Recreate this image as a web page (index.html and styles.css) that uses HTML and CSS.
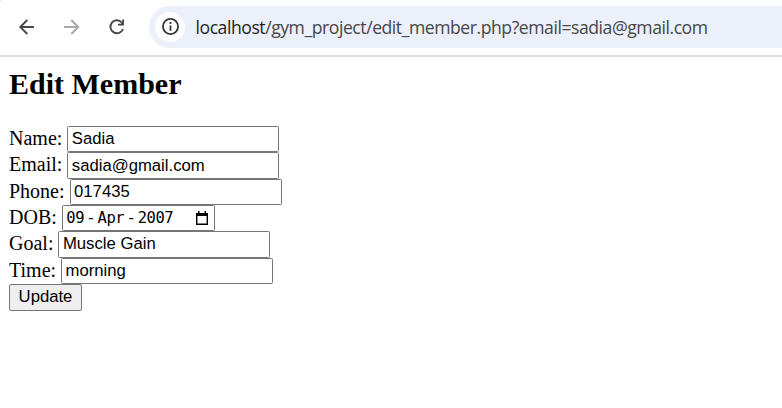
FILE: index.html
```html
<!DOCTYPE html>
<html lang="en">
<head>
<meta charset="utf-8">
<title>Edit Member</title>
<link rel="stylesheet" href="styles.css">
</head>
<body>
<header class="toolbar">
  <svg class="nav" viewBox="0 0 20 20"><path d="M17 10H3.500M10.300 3 3.300 10l7 7"/></svg>
  <svg class="nav off" viewBox="0 0 20 20"><path d="M2 10h14M9.300 3l7 7-7 7"/></svg>
  <svg class="nav" viewBox="0 0 20 20"><path d="M16 12a6.500 6.500 0 1 1-1.200-6.500"/><path class="fill" d="M17 2.500v6h-6V6.700h2.600l1.600-1.600V2.500z"/></svg>
  <div class="omnibox">
    <span class="info"><svg viewBox="0 0 20 20"><circle cx="10" cy="10" r="7.200"/><path d="M10 9v5M10 5.800v1.800"/></svg></span>
    <span class="url"><b>localhost</b>/gym_project/edit_member.php?email=sadia@gmail.com</span>
  </div>
</header>
<main>
  <h1>Edit Member</h1>
  <form>
    <div class="row"><label>Name:</label><span class="field">Sadia</span></div>
    <div class="row tall"><label>Email:</label><span class="field">sadia@gmail.com</span></div>
    <div class="row"><label>Phone:</label><span class="field">017435</span></div>
    <div class="row"><label>DOB:</label><span class="field date"><span>09</span><span>-</span><span>Apr</span><span>-</span><span>2007</span><svg viewBox="0 0 14 15"><path d="M1.700 3h10.600v10.300H1.700z"/><path class="fill" d="M1 2h12v3H1zM3 0h1.500v3H3zM9.500 0H11v3H9.500z"/></svg></span></div>
    <div class="row tall goal"><label>Goal:</label><span class="field">Muscle Gain</span></div>
    <div class="row"><label>Time:</label><span class="field">morning</span></div>
    <button type="button">Update</button>
  </form>
</main>
</body>
</html>
```
FILE: styles.css
```css
* { box-sizing: border-box; }
body { margin: 0; background: #fff; color: #000; font-family: "Liberation Serif", serif; }
.toolbar { display: flex; align-items: center; height: 57px; padding: 0 0 2px 17px; border-bottom: 2px solid #dfdfdf; background: radial-gradient(circle at 4px 4px, #fff 4px, #d3e3fd 5px) 0 0 / 4px 4px no-repeat; }
.nav { width: 20px; height: 20px; margin-right: 25px; fill: none; stroke: #474747; stroke-width: 1.900; }
.nav .fill { fill: #474747; stroke: none; }
.off { stroke: #a9a9a9; }
.omnibox { display: flex; align-items: center; flex: 1; height: 42px; margin-left: -3px; padding-left: 6px; border-radius: 21px 0 0 21px; background: #ebf0fa; }
.info { display: flex; align-items: center; justify-content: center; width: 30px; height: 30px; margin-right: 10.500px; border-radius: 50%; background: #fff; }
.info svg { width: 21px; height: 21px; fill: none; stroke: #333; stroke-width: 1.700; }
.url { padding-top: 1px; color: #474747; font: 17.600px "Open Sans", sans-serif; letter-spacing: -.45px; white-space: nowrap; }
.url b { color: #1f1f1f; font-weight: 400; }
main { padding: 9px 9px 0; }
h1 { margin: 0 0 24px; font-size: 30px; line-height: 36px; }
.row { display: flex; height: 26px; font-size: 20px; line-height: 24px; }
.tall { height: 27px; }
.field { width: 212px; height: 26px; margin-left: 5px; padding-left: 3.500px; border: 1px solid #767676; border-radius: 1.500px; font: 16.700px/24px "Liberation Sans", sans-serif; }
.tall .field { height: 27px; line-height: 26px; }
.goal .field { line-height: 24px; }
.date { display: flex; align-items: center; gap: 2.400px; width: 153px; font: 15.500px "DejaVu Sans Mono", monospace; letter-spacing: -.5px; }
.date span { padding-bottom: 1px; }
.date svg { width: 14px; height: 15px; margin-left: auto; margin-right: 5px; fill: none; stroke: #000; stroke-width: 1.400; }
.date .fill { fill: #000; stroke: none; }
button { display: block; width: 73px; height: 27px; padding: 0 0 2px; border: 1px solid #767676; border-radius: 2px; background: #efefef; color: #000; font: 16.700px "Liberation Sans", sans-serif; }
```
